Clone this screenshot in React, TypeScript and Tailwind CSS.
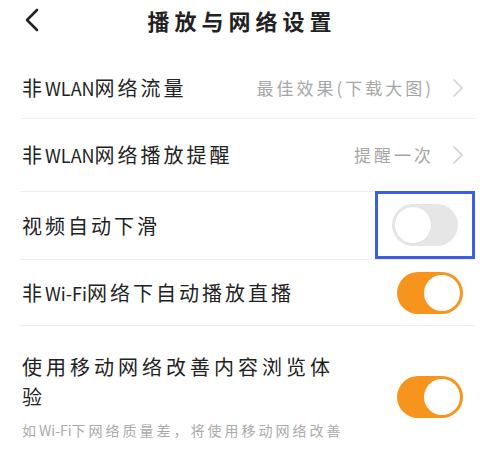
const font = { fontFamily: '"Noto Sans CJK SC", "Noto Sans", sans-serif' };

function Chevron() {
  return (
    <svg className="w-[12px] h-[20px] ml-[18px]" viewBox="0 0 12 20" fill="none" stroke="#cfcfcf" strokeWidth={1.6} strokeLinecap="round" strokeLinejoin="round">
      <path d="M2 2l8 8-8 8" />
    </svg>
  );
}

function Toggle({ on }: { on: boolean }) {
  return on ? (
    <div className="w-[66px] h-[42px] rounded-full bg-[#f7941d] flex items-center justify-end pr-[3px]">
      <div className="w-[36px] h-[36px] rounded-full bg-white" />
    </div>
  ) : (
    <div className="w-[66px] h-[42px] rounded-full bg-[#e6e6e6] flex items-center pl-[2px]">
      <div className="w-[38px] h-[38px] rounded-full bg-white border border-[#e2e2e2]" />
    </div>
  );
}

function Divider() {
  return <div className="h-px bg-[#efefef] ml-[20px] mr-[5px]" />;
}

export default function App() {
  return (
    <div className="w-[480px] h-[455px] bg-white overflow-hidden text-[#222]" style={font}>
      <div className="h-[40px] flex items-center relative">
        <svg className="absolute left-[24px] top-[8px] w-[16px] h-[24px]" viewBox="0 0 16 24" fill="none" stroke="#222" strokeWidth={2.6} strokeLinecap="round" strokeLinejoin="round">
          <path d="M13 2L3 12l10 10" />
        </svg>
        <div className="w-full text-center text-[22px] font-bold tracking-[5px] pl-[4px]">播放与网络设置</div>
      </div>

      <div className="h-[78px] flex items-center pl-[22px] pr-[16px] pt-[18px]">
        <div className="text-[20px] tracking-[3px]">
          非<span className="tracking-[0px] text-[18px]">WLAN</span>网络流量
        </div>
        <div className="ml-auto text-[17px] tracking-[3px] text-[#a6a6a6]">最佳效果(下载大图)</div>
        <Chevron />
      </div>
      <Divider />

      <div className="h-[72px] flex items-center pl-[22px] pr-[16px]">
        <div className="text-[20px] tracking-[3px]">
          非<span className="tracking-[0px] text-[18px]">WLAN</span>网络播放提醒
        </div>
        <div className="ml-auto text-[17px] tracking-[3px] text-[#a6a6a6]">提醒一次</div>
        <Chevron />
      </div>
      <Divider />

      <div className="h-[67px] flex items-center pl-[22px] relative">
        <div className="text-[20px] tracking-[3px]">视频自动下滑</div>
        <div className="absolute left-[375px] top-[-1px] w-[100px] h-[68px] border-[3px] border-[#3b5ee6] flex items-center justify-center">
          <Toggle on={false} />
        </div>
      </div>
      <Divider />

      <div className="h-[65px] flex items-center pl-[22px] pr-[17px]">
        <div className="text-[20px] tracking-[3px]">
          非<span className="tracking-[0px] text-[18px]">Wi-Fi</span>网络下自动播放直播
        </div>
        <div className="ml-auto">
          <Toggle on={true} />
        </div>
      </div>
      <Divider />

      <div className="flex items-center pl-[22px] pr-[17px] pt-[26px]">
        <div className="w-[340px]">
          <div className="text-[20px] leading-[30px] tracking-[4px] w-[326px]">使用移动网络改善内容浏览体验</div>
          <div className="text-[14px] tracking-[3px] text-[#aaaaaa] mt-[8px]">
            如<span className="tracking-[0px]">Wi-Fi</span>下网络质量差，将使用移动网络改善
          </div>
        </div>
        <div className="ml-auto">
          <Toggle on={true} />
        </div>
      </div>
    </div>
  );
}
